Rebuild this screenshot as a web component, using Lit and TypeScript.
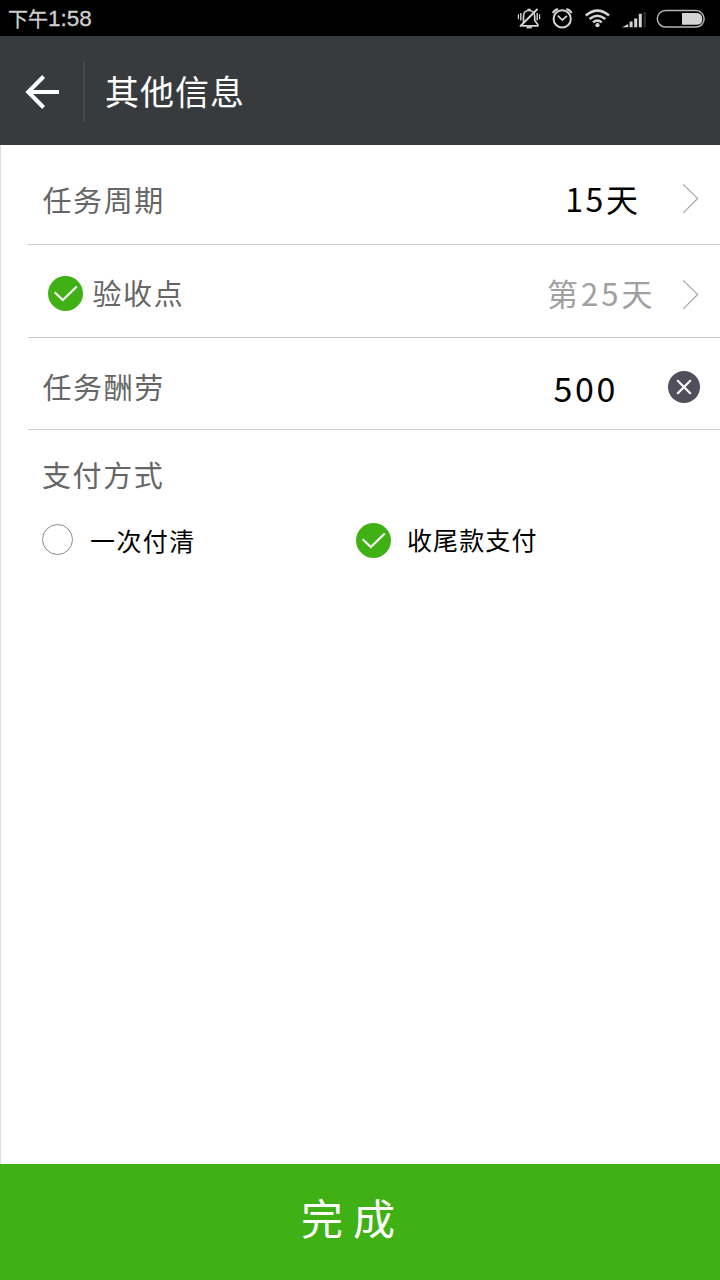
import { LitElement, html, css, svg } from "lit";
import { customElement, property } from "lit/decorators.js";

@customElement("check-mark")
class CheckMark extends LitElement {
  static styles = css`
    :host { display: block; width: 35px; height: 35px; flex: none; }
    svg { display: block; }
  `;
  render() {
    return html`<svg width="35" height="35" viewBox="0 0 35 35">
      <circle cx="17.5" cy="17.5" r="17.5" fill="#3fb114" />
      <path d="M6.7 16.2L14.8 24L28.8 10.5" fill="none" stroke="#fff" stroke-width="2.1" />
    </svg>`;
  }
}

@customElement("status-bar")
class StatusBar extends LitElement {
  @property() period = "";
  @property() time = "";
  static styles = css`
    :host { display: flex; height: 36px; background: #000; align-items: flex-start; }
    .time { display: flex; padding-left: 8px; line-height: 37px; font-size: 20px; color: #cfcfcf; flex: 1; white-space: nowrap;
      font-family: "Noto Sans CJK SC", sans-serif; -webkit-text-stroke: 0.3px #cfcfcf; }
    .clock { font-family: "Liberation Sans", sans-serif; font-size: 22.5px; line-height: 37px; }
    svg { display: block; flex: none; margin-right: 2px; }
  `;
  render() {
    return html`<div class="time"><span>${this.period}</span><span class="clock">${this.time}</span></div>
      <svg width="218" height="36" viewBox="0 0 218 36" fill="none" stroke="#d4d4d4">
        <g stroke-width="1.7">
          <path d="M23.5 22.5V16C23.5 12.5 26 10.5 29 10.5C32 10.5 34.7 12.5 34.7 16V20.5L37.8 24.5V25.8H22" />
          <path d="M20 26.5L37.5 9" stroke-width="2" />
          <path d="M26.6 27.4H31.8" stroke-width="2" />
          <path d="M27.4 9.7H30.6" stroke-width="2" />
          <path d="M20.8 13V20.5M37.2 13V20.5" stroke-width="1.4" />
          <path d="M18.4 14.3V19.2M39.6 14.3V19.2" stroke-width="1.2" />
        </g>
        <circle cx="62.2" cy="18.9" r="8.6" stroke-width="2" />
        <path d="M57.8 15.6L62.3 20L67 15.8" stroke-width="1.7" />
        <path d="M52.8 13.2Q54 10.2 58 9M71.6 13.2Q70.4 10.2 66.4 9" stroke-width="2" />
        <g stroke-width="2.5">
          <path d="M85.8 15.5Q97.4 5.8 109 15.5" />
          <path d="M89.5 19Q97.4 12.4 105.3 19" />
          <path d="M93 22.4Q97.4 18.8 101.8 22.4" />
        </g>
        <circle cx="97.5" cy="25.2" r="2.1" fill="#d4d4d4" stroke="none" />
        <g fill="#d4d4d4" stroke="none">
          <path d="M122 27.3L128.2 24V27.3Z" />
          <rect x="129.6" y="21.5" width="3" height="5.8" />
          <rect x="134.2" y="18.5" width="3" height="8.8" />
          <rect x="138.8" y="13.8" width="3" height="13.5" />
          <rect x="143.6" y="12" width="2.2" height="15.3" fill="#2e2e2e" />
          <path d="M182 13H196Q202.3 13 202.3 18.9Q202.3 24.8 196 24.8H182Z" />
        </g>
        <rect x="157.3" y="10.6" width="46.8" height="16.4" rx="8.2" stroke="#b4b4b4" stroke-width="1.5" />
      </svg>`;
  }
}

const chevron = svg`<path d="M.3 .5L14.7 14.5L.3 28.7" fill="none" stroke="#a8a8a8" stroke-width="1.2" />`;

@customElement("app-root")
class AppRoot extends LitElement {
  static styles = css`
    :host { display: flex; flex-direction: column; height: 1280px; width: 720px; background: #fff;
      font-family: "Noto Sans CJK SC", sans-serif; box-sizing: border-box; overflow: hidden; }
    svg { display: block; flex: none; }
    .bar { height: 109px; background: #383b3e; display: flex; align-items: center; flex: none; color: #fff; }
    .back { margin-left: 25px; margin-top: 2px; }
    .sep { width: 2px; height: 61px; background: #46494c; margin-left: 24px; margin-top: 1px; }
    .title { font-size: 34px; letter-spacing: 1px; line-height: 50px; margin-left: 20px; }
    .body { flex: 1; border-left: 1px solid #dcdcdc; padding-left: 27px; }
    .row { box-sizing: border-box; display: flex; align-items: center; border-bottom: 1px solid #cdcdcd; padding-left: 14px; padding-right: 20.5px; }
    .period { height: 100px; padding-top: 9px; }
    .accept { height: 93px; padding-left: 20px; padding-top: 4px; }
    .accept .arrow { margin-top: 3px; }
    .reward { height: 92px; padding-top: 6px; padding-right: 20px; }
    .label { font-size: 29px; letter-spacing: 1.6px; line-height: 44px; color: #666; flex: 1; white-space: nowrap; }
    .period .label, .reward .label { margin-left: 0.5px; }
    .reward .label { padding-bottom: 1px; }
    .accept .label { margin-left: 9.5px; padding-bottom: 2px; }
    .value { line-height: 44px; white-space: nowrap; color: #000; }
    .days { font-size: 32px; letter-spacing: 2.6px; margin-right: 42px; padding-bottom: 2px; }
    .point { font-size: 31px; letter-spacing: 3px; color: #a0a0a0; margin-right: 27px; }
    .money { font-size: 34px; letter-spacing: 2.6px; margin-right: 50px; margin-top: 3px; }
    .method { padding: 22px 0 0 14px; }
    .options { display: grid; grid-template-columns: 314px 1fr; padding: 25px 0 0 14px; }
    .option { display: flex; align-items: center; height: 38px; font-size: 25px; letter-spacing: 1.1px; color: #000; }
    .ring { box-sizing: border-box; width: 31px; height: 31px; border: 1.4px solid #8c8c8c; border-radius: 50%; margin: 0 17px 1px 0; }
    .ring + .text { letter-spacing: 1.4px; }
    check-mark + .text { margin-left: 16px; padding-bottom: 2px; }
    .done { flex: none; height: 116px; background: #3fb114; color: #fff; font-size: 42px; letter-spacing: 10px; display: flex;
      align-items: center; justify-content: center; line-height: 60px; }
    .done span { padding-right: 14px; padding-bottom: 10px; }
  `;
  render() {
    const arrow = html`<svg class="arrow" width="17" height="30" viewBox="0 0 17 30">${chevron}</svg>`;
    return html`
      <status-bar period="下午" time="1:58"></status-bar>
      <header class="bar">
        <svg class="back" width="34" height="34" viewBox="0 0 34 34" fill="none" stroke="#fff" stroke-width="4">
          <path d="M18.6 1.5L3.2 17L18.6 32.5M3 17H34" />
        </svg>
        <div class="sep"></div>
        <div class="title">其他信息</div>
      </header>
      <main class="body">
        <div class="row period"><span class="label">任务周期</span><span class="value days">15天</span>${arrow}</div>
        <div class="row accept"><check-mark></check-mark><span class="label">验收点</span><span class="value point">第25天</span>${arrow}</div>
        <div class="row reward">
          <span class="label">任务酬劳</span><span class="value money">500</span>
          <svg width="32" height="32" viewBox="0 0 32 32">
            <circle cx="16" cy="16" r="16" fill="#514f5c" />
            <path d="M9.8 9.8L22.2 22.2M22.2 9.8L9.8 22.2" stroke="#fff" stroke-width="2.2" stroke-linecap="round" />
          </svg>
        </div>
        <div class="label method">支付方式</div>
        <div class="options">
          <div class="option"><span class="ring"></span><span class="text">一次付清</span></div>
          <div class="option"><check-mark></check-mark><span class="text">收尾款支付</span></div>
        </div>
      </main>
      <footer class="done"><span>完成</span></footer>
    `;
  }
}
